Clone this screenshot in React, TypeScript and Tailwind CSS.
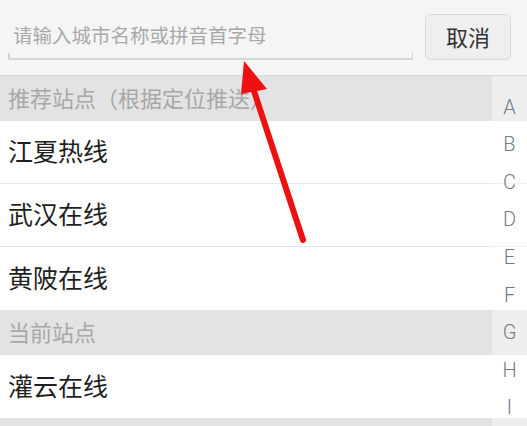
import React from "react";

const font = { fontFamily: '"Noto Sans", "Noto Sans CJK SC", sans-serif' };

function Section({ title }: { title: string }) {
  return (
    <div className="h-[45px] bg-[#e3e3e3] flex items-center pl-[8px] text-[22px] text-[#a8a8a8]">
      {title}
    </div>
  );
}

function Row({ name, last }: { name: string; last?: boolean }) {
  return (
    <div
      className={
        "h-[63px] bg-white flex items-center pl-[8px] text-[25px] text-[#1f1f1f] " +
        (last ? "" : "border-b border-[#e6e6e6]")
      }
    >
      {name}
    </div>
  );
}

export default function App() {
  const letters = ["A", "B", "C", "D", "E", "F", "G", "H", "I"];
  return (
    <div className="relative w-[527px] h-[426px] overflow-hidden bg-white" style={font}>
      <div className="h-[76px] bg-[#f5f5f5] border-b border-[#dcdcdc] flex items-start pt-[14px] pl-[8px] pr-[16px] gap-[12px]">
        <div className="relative w-[405px] h-[46px] flex items-center pl-[5px] border-b-2 border-[#d6d6d6]">
          <span className="text-[19.5px] text-[#a9a9a9] tracking-[0px]">请输入城市名称或拼音首字母</span>
          <span className="absolute left-0 bottom-0 w-[1.5px] h-[5px] bg-[#d0d0d0]" />
          <span className="absolute right-0 bottom-0 w-[1.5px] h-[5px] bg-[#d0d0d0]" />
        </div>
        <button className="w-[86px] h-[46px] rounded-[5px] border border-[#d9d9d9] bg-[#efefef] text-[22px] text-[#333] flex items-center justify-center">
          取消
        </button>
      </div>
      <Section title="推荐站点（根据定位推送）" />
      <Row name="江夏热线" />
      <Row name="武汉在线" />
      <Row name="黄陂在线" last />
      <Section title="当前站点" />
      <Row name="灌云在线" last />
      <Section title="" />

      <div className="absolute top-[76px] right-0 w-[35px] h-[350px] bg-white/40 flex flex-col items-center pt-[12px]">
        {letters.map((l) => (
          <div key={l} className="h-[37.9px] flex items-center justify-center text-[20px] text-[#6f7b88]" style={{ fontFamily: 'Roboto, "Noto Sans", sans-serif', fontWeight: 300 }}>
            {l}
          </div>
        ))}
      </div>

      <svg className="absolute left-0 top-0 pointer-events-none" width="527" height="426" viewBox="0 0 527 426">
        <line x1="303" y1="240" x2="252" y2="85" stroke="#ee1111" strokeWidth="6" strokeLinecap="round" />
        <polygon points="244,61 241,94 267,89" fill="#ee1111" />
      </svg>
    </div>
  );
}
